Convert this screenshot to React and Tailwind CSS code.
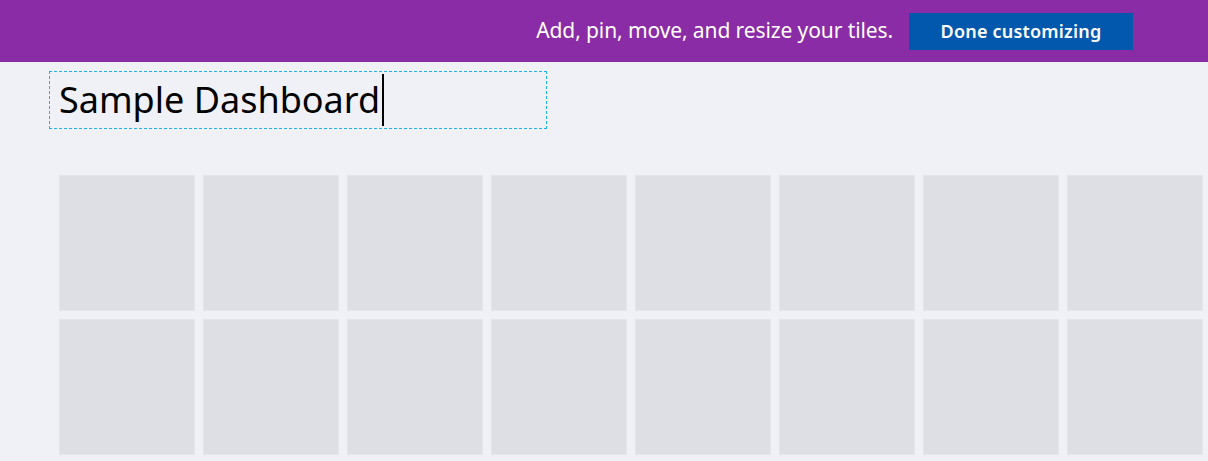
export default function App() {
  const tiles = Array.from({ length: 16 })

  return (
    <div
      className="w-[1208px] h-[461px] overflow-hidden bg-[#f0f1f6]"
      style={{ fontFamily: '"Noto Sans", "Open Sans", sans-serif' }}
    >
      {/* TOP BAR */}
      <div className="h-[62px] bg-[#8a2ca5] flex items-center justify-end pr-[75px]">
        <span className="text-white text-[21px] mr-[16px] tracking-[-0.1px]">
          Add, pin, move, and resize your tiles.
        </span>
        <button className="w-[224px] h-[37px] bg-[#0158ad] text-white text-[18px] font-semibold tracking-[0.2px]">
          Done customizing
        </button>
      </div>

      {/* TITLE */}
      <div className="ml-[49px] mt-[9px] w-[498px] h-[58px] border border-dashed border-[#1bb3e6] flex items-center pl-[9px]">
        <span className="text-[36px] text-black leading-none">Sample Dashboard</span>
        <span className="w-[2px] h-[52px] bg-black ml-[2px]" />
      </div>

      {/* TILES */}
      <div className="ml-[59px] mt-[46px] grid grid-cols-[repeat(8,136px)] gap-[8px]">
        {tiles.map((_, i) => (
          <div
            key={i}
            className="h-[136px] bg-[#dedfe4] border border-[#e4e5ea]"
          />
        ))}
      </div>
    </div>
  )
}
